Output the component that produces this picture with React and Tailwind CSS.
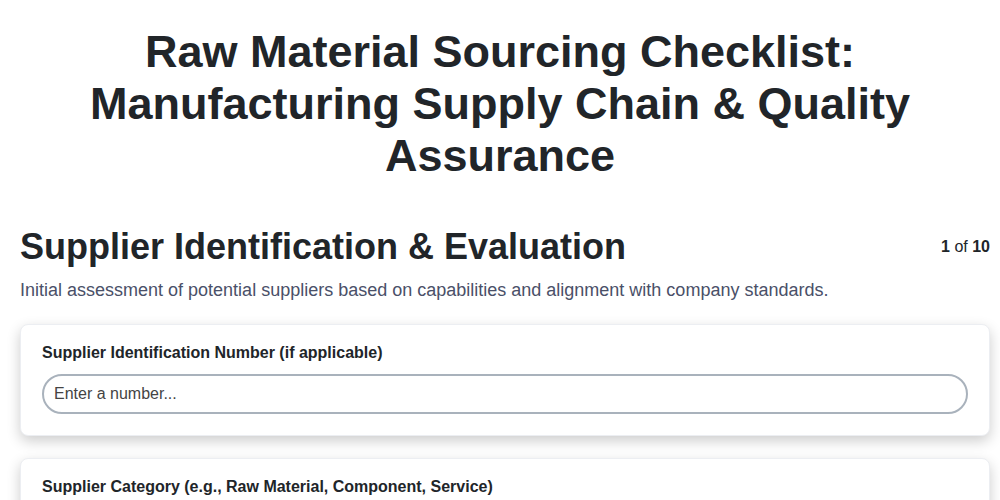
export default function App() {
  return (
    <div className="min-h-screen bg-white pt-[26px] text-[#212529]" style={{ fontFamily: '"Liberation Sans", Arial, sans-serif' }}>
      <h1 className="mx-auto max-w-[880px] text-center text-[45px] font-bold leading-[1.15]">
        Raw Material Sourcing Checklist: Manufacturing Supply Chain &amp; Quality Assurance
      </h1>

      <section className="pl-5 pr-[10px]">
        <div className="mt-[44px] flex items-start justify-between">
          <h2 className="text-[36px] font-bold leading-[1.2]">Supplier Identification &amp; Evaluation</h2>
          <div className="pt-[10px] text-base">
            <span className="font-bold">1</span> of <span className="font-bold">10</span>
          </div>
        </div>
        <p className="mt-[8px] text-lg text-[#4a5068]">
          Initial assessment of potential suppliers based on capabilities and alignment with company standards.
        </p>

        <div className="mt-[20px] flex flex-col gap-[22px] pb-6">
          <div className="rounded-lg border border-[#eceef2] bg-white px-[21px] pb-[21px] pt-[16px] shadow-[0_5px_14px_rgba(0,0,0,0.2)]">
            <label className="block text-base font-bold leading-6">Supplier Identification Number (if applicable)</label>
            <input
              type="text"
              placeholder="Enter a number..."
              className="mt-[9px] h-[40px] w-full rounded-full border-2 border-[#a9b2bc] px-[10px] text-base text-[#333] placeholder:text-[#444] outline-none"
            />
          </div>
          <div className="rounded-lg border border-[#eceef2] bg-white px-[21px] pb-[21px] pt-[16px] shadow-[0_5px_14px_rgba(0,0,0,0.2)]">
            <label className="block text-base font-bold leading-6">Supplier Category (e.g., Raw Material, Component, Service)</label>
            <input
              type="text"
              placeholder="Enter text..."
              className="mt-[9px] h-[40px] w-full rounded-full border-2 border-[#a9b2bc] px-[10px] text-base text-[#333] placeholder:text-[#444] outline-none"
            />
          </div>
        </div>
      </section>
    </div>
  );
}
